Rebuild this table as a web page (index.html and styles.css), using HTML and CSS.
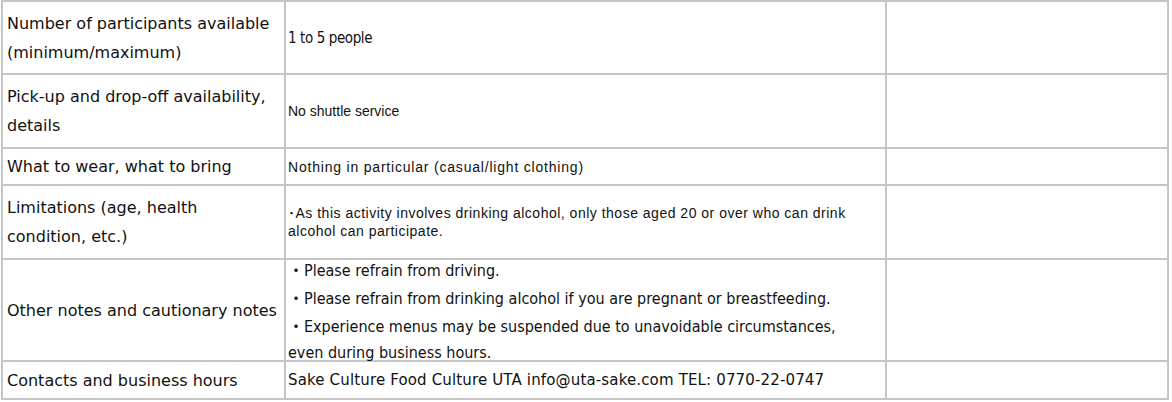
FILE: index.html
```html
<!DOCTYPE html>
<html lang="en">
<head>
<meta charset="utf-8">
<title>Activity details</title>
<link rel="stylesheet" href="styles.css">
</head>
<body>
<table class="info">
  <colgroup>
    <col class="c1">
    <col class="c2">
    <col class="c3">
  </colgroup>
  <tbody>
    <tr class="r-tall">
      <td class="label">Number of participants available (minimum/maximum)</td>
      <td class="val narrow">1 to 5 people</td>
      <td class="empty"></td>
    </tr>
    <tr class="r-tall2">
      <td class="label">Pick-up and drop-off availability, details</td>
      <td class="val small">No shuttle service</td>
      <td class="empty"></td>
    </tr>
    <tr class="r-short">
      <td class="label">What to wear, what to bring</td>
      <td class="val small wider">Nothing in particular (casual/light clothing)</td>
      <td class="empty"></td>
    </tr>
    <tr class="r-tall2">
      <td class="label">Limitations (age, health condition, etc.)</td>
      <td class="val small spaced">･As this activity involves drinking alcohol, only those aged 20 or over who can drink<br>alcohol can participate.</td>
      <td class="empty"></td>
    </tr>
    <tr class="r-notes">
      <td class="label">Other notes and cautionary notes</td>
      <td class="val cond">
        <div class="notes">
          <p>・Please refrain from driving.</p>
          <p>・Please refrain from drinking alcohol if you are pregnant or breastfeeding.</p>
          <p>・Experience menus may be suspended due to unavoidable circumstances,<br>even during business hours.</p>
        </div>
      </td>
      <td class="empty"></td>
    </tr>
    <tr class="r-short2">
      <td class="label">Contacts and business hours</td>
      <td class="val wide">Sake Culture Food Culture UTA info@uta-sake.com TEL: 0770-22-0747</td>
      <td class="empty"></td>
    </tr>
  </tbody>
</table>
</body>
</html>
```
FILE: styles.css
```css
html, body {
  margin: 0;
  padding: 0;
  background: #ffffff;
}

.info {
  margin: 0 0 0 1px;
  width: 1168px;
  table-layout: fixed;
  border-collapse: separate;
  border-spacing: 0;
  border: 1px solid #c6c6c6;
  color: #111111;
}

.c1 { width: 283px; }
.c2 { width: 601px; }
.c3 { width: 282px; }

.info td {
  box-sizing: border-box;
  border: 1px solid #c6c6c6;
  vertical-align: middle;
  padding: 0;
}

.r-tall td { height: 73px; }
.r-tall2 td { height: 74px; }
.r-short td { height: 37px; }
.r-notes td { height: 102px; }
.r-short2 td { height: 38px; }

.label {
  font-family: "DejaVu Sans", Verdana, sans-serif;
  font-size: 16px;
  line-height: 29px;
  padding: 0 4px !important;
}

.val {
  padding: 0 2px !important;
}

.narrow {
  font-family: "DejaVu Sans Condensed", "DejaVu Sans", sans-serif;
  font-stretch: condensed;
  font-size: 15px;
  letter-spacing: -0.4px;
}

.small {
  font-family: "Liberation Sans", Arial, "Noto Sans CJK JP", sans-serif;
  font-size: 14px;
  line-height: 18px;
}

.small.wider {
  letter-spacing: 0.8px;
}

.small.spaced {
  letter-spacing: 0.5px;
}

.cond {
  font-family: "DejaVu Sans Condensed", "DejaVu Sans", "Noto Sans CJK JP", sans-serif;
  font-stretch: condensed;
  font-size: 16px;
  line-height: 26px;
}

.notes {
  box-sizing: border-box;
  height: 100px;
  padding-top: 4px;
  display: flex;
  flex-direction: column;
  justify-content: center;
  overflow: visible;
}

.notes p {
  margin: 0 0 2px;
}

.notes p:last-child {
  margin-bottom: 0;
}

.wide {
  font-family: "DejaVu Sans", Verdana, sans-serif;
  font-size: 15px;
  letter-spacing: 0.15px;
  line-height: 20px;
}
```
